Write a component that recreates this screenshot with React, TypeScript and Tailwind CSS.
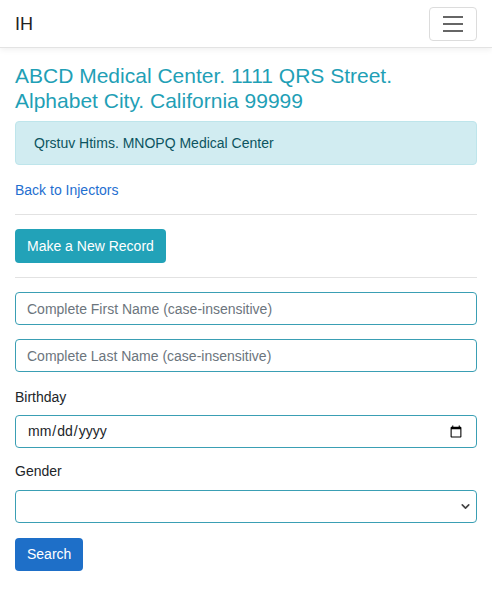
import { ChevronDown } from 'lucide-react'

export default function App() {
  return (
    <div className="min-h-[590px] bg-white font-['Liberation_Sans',Arial,sans-serif] text-[14px] text-[#212529]">
      <nav className="flex h-[48px] items-center justify-between border-b border-[#e3e3e3] px-[15px] shadow-[0_2px_6px_rgba(0,0,0,0.06)]">
        <span className="mt-[2px] text-[18px] text-[#222]">IH</span>
        <button className="flex h-[34px] w-[48px] flex-col items-center justify-center gap-[5px] rounded-[4px] border border-[#dcdcdc]">
          <span className="h-[2px] w-[20px] bg-[#666]" />
          <span className="h-[2px] w-[20px] bg-[#666]" />
          <span className="h-[2px] w-[20px] bg-[#666]" />
        </button>
      </nav>

      <main className="px-[15px] pt-[15px]">
        <h1 className="text-[21px] leading-[25px] text-[#1fa0b6]">
          ABCD Medical Center. 1111 QRS Street.
          <br />
          Alphabet City. California 99999
        </h1>

        <div className="mt-[8px] flex h-[44px] items-center rounded-[4px] border border-[#bee5eb] bg-[#d1ecf1] px-[18px] text-[#0c5460]">
          Qrstuv Htims. MNOPQ Medical Center
        </div>

        <a href="#" className="mt-[15px] block leading-[20px] text-[#1f6fd0]">
          Back to Injectors
        </a>

        <hr className="mt-[14px] border-[#e2e2e2]" />

        <button className="mt-[14px] h-[34px] rounded-[4px] bg-[#22a2b8] px-[12px] text-white">
          Make a New Record
        </button>

        <hr className="mt-[14px] border-[#e2e2e2]" />

        <div className="mt-[14px] flex flex-col gap-[14px]">
          <input
            className="h-[33px] w-full rounded-[4px] border border-[#3a9fb4] px-[11px] outline-none placeholder:text-[#6c757d]"
            placeholder="Complete First Name (case-insensitive)"
          />
          <input
            className="h-[33px] w-full rounded-[4px] border border-[#3a9fb4] px-[11px] outline-none placeholder:text-[#6c757d]"
            placeholder="Complete Last Name (case-insensitive)"
          />
        </div>

        <label className="mt-[15px] block leading-[20px]">Birthday</label>
        <input
          type="date"
          className="mt-[8px] block h-[33px] w-full rounded-[4px] border border-[#3a9fb4] px-[11px] text-[#212529] outline-none"
        />

        <label className="mt-[13px] block leading-[20px]">Gender</label>
        <div className="relative mt-[9px]">
          <select className="block h-[33px] w-full appearance-none rounded-[4px] border border-[#3a9fb4] bg-white px-[11px] outline-none">
            <option value=""></option>
            <option>Male</option>
            <option>Female</option>
          </select>
          <ChevronDown
            className="pointer-events-none absolute right-[5px] top-[10px] h-[13px] w-[13px] text-[#444]"
            strokeWidth={3}
          />
        </div>

        <button className="mt-[15px] h-[33px] rounded-[4px] bg-[#1e6fc8] px-[12px] text-white">
          Search
        </button>
      </main>
    </div>
  )
}
